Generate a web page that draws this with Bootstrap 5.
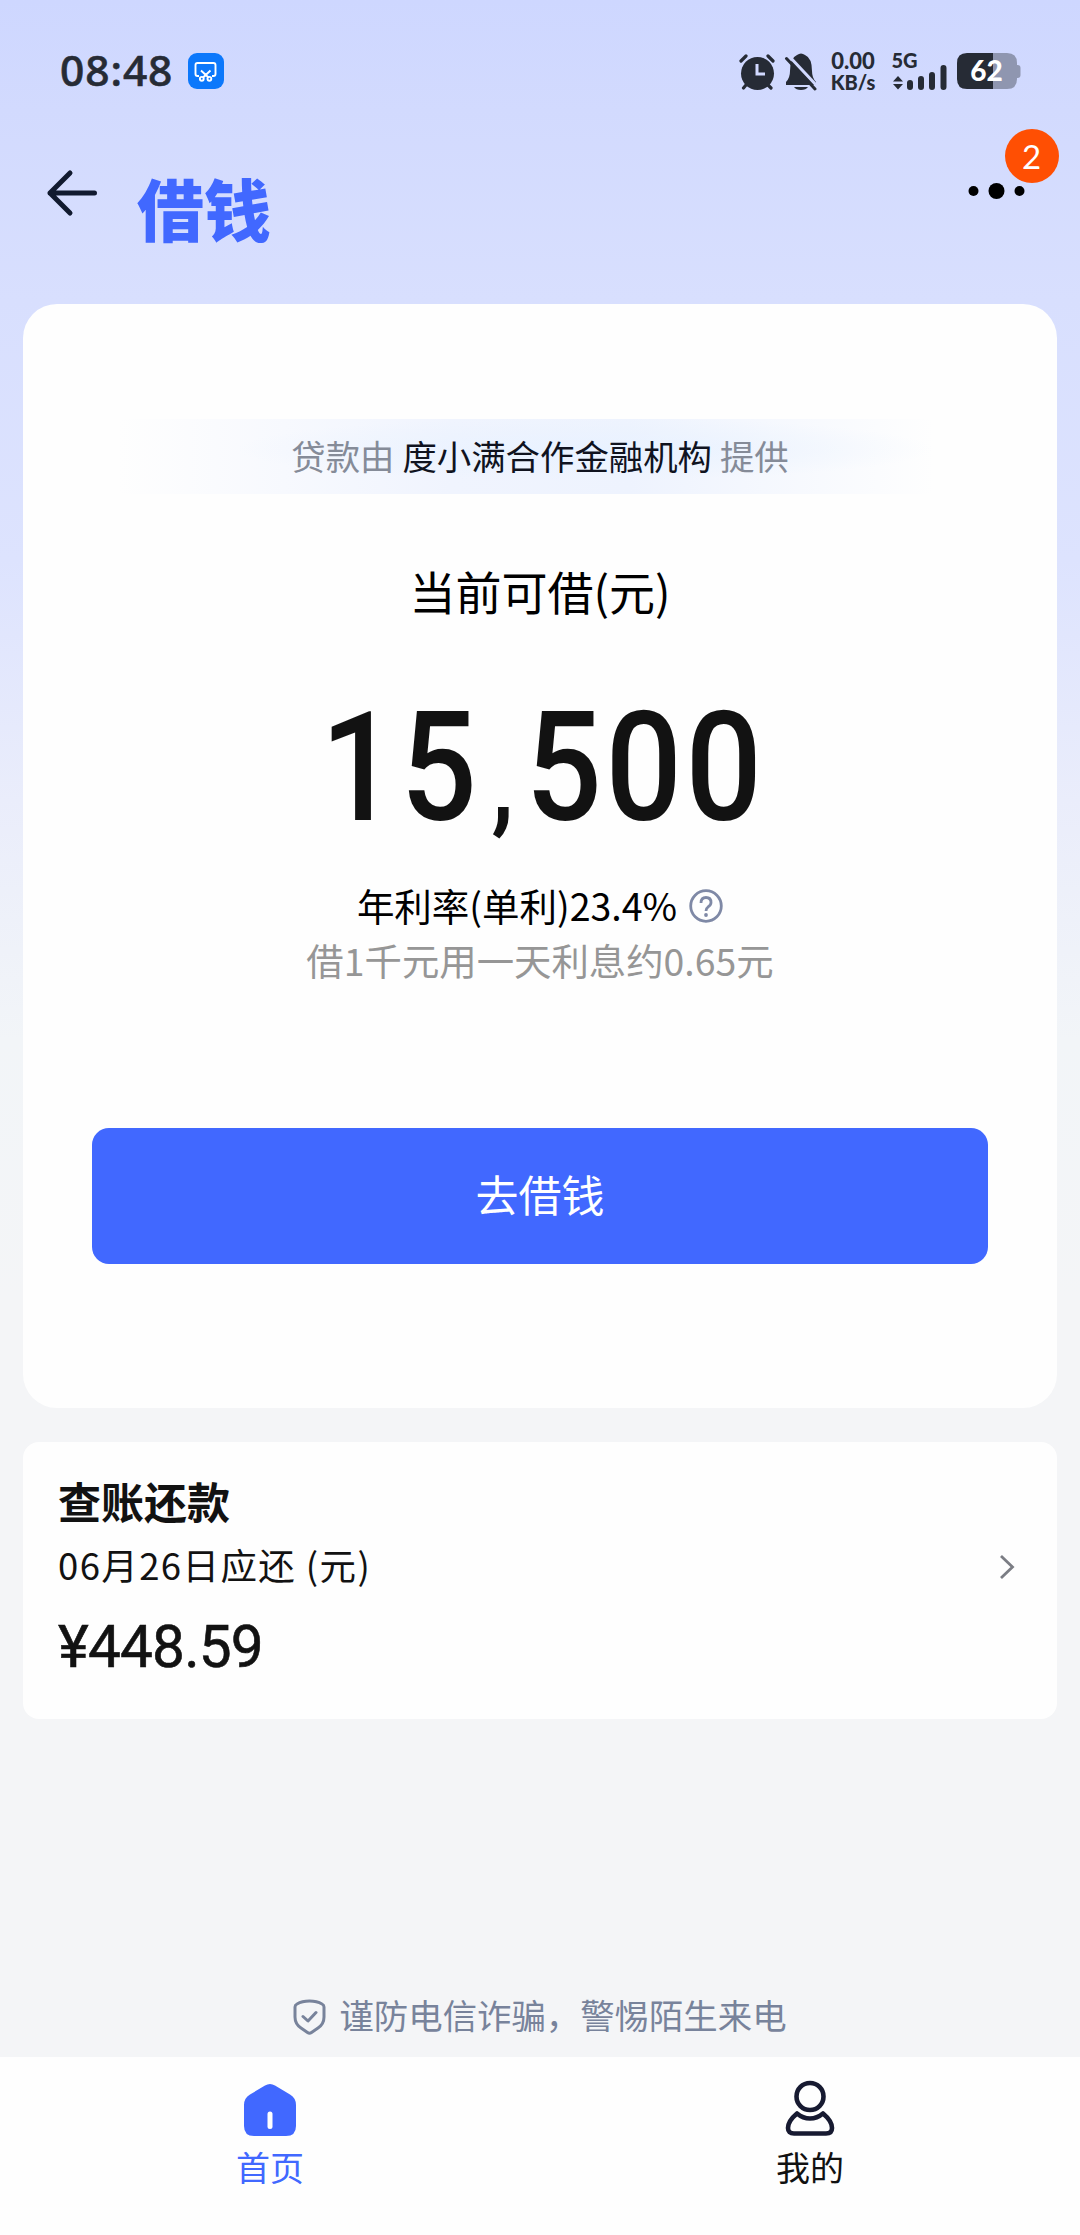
<!DOCTYPE html>
<html lang="zh-CN">
<head>
<meta charset="utf-8">
<meta name="viewport" content="width=device-width, initial-scale=1">
<title>借钱</title>
<link href="https://cdn.jsdelivr.net/npm/bootstrap@5.3.0/dist/css/bootstrap.min.css" rel="stylesheet">
<style>
:root{--brand:#4168ff;--ink:#121212;--muted-ink:#7c8496}
html,body{height:2235px}
body{font-family:"Noto Sans CJK SC",sans-serif;color:#000;background:linear-gradient(180deg,#ced7ff 0,#d2dafe 110px,#d8dffe 300px,#dde3fe 560px,#eaedfb 800px,#f2f5f8 1040px,#f4f5f7 1300px,#f4f5f7 2057px);overflow:hidden}
svg{display:block;flex:none}
.status{height:100px;padding:42px 59px 0 60px;font-family:"Noto Sans",sans-serif;color:#262b35}
.clock{font-size:42.5px;font-weight:500;line-height:58px;width:128px;letter-spacing:.9px;margin-top:-2px;-webkit-text-stroke:.6px #262b35}
.speed{width:52px;margin:0 12px 0 9px;font-family:Lato,sans-serif;font-size:22px;font-weight:900;line-height:22px;text-align:center;white-space:nowrap}
.speed .unit{font-size:20px;line-height:20px}
.head{height:204px;padding:0 54.5px 0 45px}
.back{margin-top:68px}
.head h1{font-size:67px;font-weight:900;line-height:66px;color:var(--brand);margin:74px 0 0 38px}
.more{margin-top:82px}
.count{position:absolute;left:39px;top:-53px;width:54px;height:54px;background:#ff4f03;color:#fff;font:400 33px/54px Lato,sans-serif}
.panel{margin:0 23px;background:#fefefe;border-radius:34px;height:1104px;padding:115px 69px 0}
.source{height:75px;font-size:34.4px;line-height:72px;color:#858b98;background:radial-gradient(ellipse at 55% 40%,#e9f2ff 0,rgba(233,242,255,0) 50%),linear-gradient(90deg,rgba(238,241,254,0) 3%,#f0f4fe 40%,#eef3fe 60%,rgba(238,241,254,0) 94%)}
.source b{font-weight:400;color:#10131f;margin:0 8px}
.label{font-size:46px;line-height:60px;margin-top:66px}
.sum{font:500 152px/180px Roboto,sans-serif;color:var(--ink);margin-top:58px;letter-spacing:4px;transform:translateX(3px) scaleX(.885)}
.sum .sep{font-size:115px;line-height:1;margin:0 9px 0 12px}
.rate{font-size:37.5px;line-height:50px;margin-top:22px}
.rate svg{margin:2px 0 0 12px}
.hint{font-size:37.4px;line-height:50px;color:#969696;margin-top:5px}
.go{height:136px;margin-top:143px;border-radius:17px;background:var(--brand);color:#fff;font-size:43px;border:0}
.go span{display:block;margin-top:-6px}
.bill{margin:34px 23px 0;height:277px;background:#fefefe;border-radius:16px;padding:0 42px 0 35px;color:var(--ink)}
.bill h2{font-size:43px;font-weight:700;line-height:60px;margin:-9px 0 0}
.bill .due{font-size:36.5px;line-height:50px;margin-top:10px;letter-spacing:1.4px}
.bill .owed{font:400 58.5px/70px Roboto,sans-serif;-webkit-text-stroke:.6px var(--ink);margin-top:22px;letter-spacing:-.8px}
.chev{margin-top:-27px}
.tip{margin-top:264px;height:74px;padding-bottom:10px;font-size:34.4px;color:#78839b}
.tip svg{margin:4px 13px 0 0}
.tabs{height:178px;background:#fefefe;padding-top:23px}
.tabs a{font-size:34px;line-height:50px;color:#111;text-decoration:none}
.tabs a span{margin-top:4px}
.tabs a.active{color:var(--brand)}
</style>
</head>
<body>
<div class="status d-flex align-items-center">
  <span class="clock">08:48</span>
  <svg width="36" height="36" viewBox="0 0 36 36"><rect width="36" height="36" rx="9" fill="#0c78fb"/><g fill="none" stroke="#fff" stroke-width="1.9"><path d="M11 23H9.500Q7.500 23 7.500 21V12Q7.500 10 9.500 10H25.500Q27.500 10 27.500 12V21Q27.500 23 25.500 23H24M13 17.500 20.500 24.500M22.500 17.500 15 24.500"/><circle cx="13.800" cy="25.800" r="1.900"/><circle cx="21.400" cy="25.800" r="1.900"/></g></svg>
  <svg class="ms-auto" width="38" height="40" viewBox="739 50 38 40"><g fill="none" stroke="#262b35" stroke-width="3.200" stroke-linecap="round"><path d="M742 60 747 55M774 60 769 55M747 84 744.500 87M769 84 772 87"/></g><circle cx="758.500" cy="72.500" r="16.500" fill="#262b35"/><path d="M758 63V73H766" fill="none" stroke="#d1d9ff" stroke-width="3"/></svg>
  <svg class="ms-2" width="34" height="40" viewBox="785 50 34 40"><path d="M787 84V81Q791 77 791 70Q791 57 798 54Q802 51 806 54Q813 57 813 70Q813 77 817 81V84ZM795 86H809Q807 89 802 89T795 86Z" fill="#262b35"/><path d="M789 54 818 85" stroke="#d1d9ff" stroke-width="3"/><path d="M787.500 57.500 816 88" stroke="#262b35" stroke-width="3" stroke-linecap="round"/></svg>
  <div class="speed">0.00<div class="unit">KB/s</div></div>
  <svg width="58" height="52" viewBox="891 45 58 52"><text x="891.500" y="68" font-family="Lato" font-weight="900" font-size="20" fill="#262b35">5G</text><path d="M893 81.500 898 76 903 81.500ZM893 84 898 89.500 903 84Z" fill="#262b35"/><path d="M910 83V87M921 79V87M932 75V87M943.500 68V87" stroke="#262b35" stroke-width="6" stroke-linecap="round"/></svg>
  <svg width="64" height="50" viewBox="957 46 64 50" class="ms-2"><rect x="1013" y="65" width="7.500" height="13" rx="3" fill="#8f96b0"/><path d="M993 53H1007Q1017 53 1017 63V79Q1017 89 1007 89H993Z" fill="#8f96b0"/><path d="M993 53H967Q957 53 957 63V79Q957 89 967 89H993Z" fill="#262b35"/><text x="986.500" y="81" text-anchor="middle" font-family="Lato" font-weight="900" font-size="28" fill="#fff">62</text></svg>
</div>
<header class="head d-flex align-items-start">
  <svg class="back" width="54" height="50" viewBox="0 0 54 50"><path d="M25 5 5 25 25 45M5 25H49.500" fill="none" stroke="#111a2f" stroke-width="5" stroke-linecap="round" stroke-linejoin="round"/></svg>
  <h1>借钱</h1>
  <div class="more position-relative ms-auto">
    <svg width="60" height="18" viewBox="966 182 60 18"><circle cx="973.500" cy="191" r="5"/><circle cx="996.500" cy="191" r="8"/><circle cx="1019.500" cy="191" r="5"/></svg>
    <span class="count rounded-circle text-center">2</span>
  </div>
</header>
<main class="panel text-center">
  <div class="source">贷款由<b>度小满合作金融机构</b>提供</div>
  <div class="label">当前可借(元)</div>
  <div class="sum">15<span class="sep">,</span>500</div>
  <div class="rate d-flex justify-content-center align-items-center">年利率(单利)23.4%
    <svg width="34" height="34" viewBox="0 0 34 34"><g fill="none" stroke="#7f89a6" stroke-width="2.800"><circle cx="17" cy="17" r="15.300"/><path d="M12 14Q12 8.500 17 8.500T22 13.500Q22 16 19.200 17.800Q17 19.300 17 22"/></g><circle cx="17" cy="26" r="1.900" fill="#7f89a6"/></svg>
  </div>
  <div class="hint">借1千元用一天利息约0.65元</div>
  <button class="go btn w-100 p-0" type="button"><span>去借钱</span></button>
</main>
<section class="bill d-flex align-items-center justify-content-between">
  <div>
    <h2>查账还款</h2>
    <div class="due">06月26日应还 (元)</div>
    <div class="owed">¥448.59</div>
  </div>
  <svg class="chev" width="16" height="28" viewBox="0 0 16 28"><path d="M2 3 13.500 14 2 25" fill="none" stroke="#7b7d84" stroke-width="2.800"/></svg>
</section>
<div class="tip d-flex justify-content-center align-items-center">
  <svg width="33" height="36" viewBox="0 0 33 36"><path d="M16.500 2Q24 2 29 5Q31 6 31 8V18Q31 25 25 29L18.500 33.500Q16.500 35 14.500 33.500L8 29Q2 25 2 18V8Q2 6 4 5Q9 2 16.500 2ZM10 17.500 15 22 23 13.500" fill="none" stroke="#78839b" stroke-width="3" stroke-linecap="round" stroke-linejoin="round"/></svg>
  谨防电信诈骗，警惕陌生来电
</div>
<nav class="tabs row g-0">
  <a class="col-6 active d-flex flex-column align-items-center" href="#">
    <svg width="54" height="58" viewBox="0 0 54 58"><path d="M22 5.500Q27 2.500 32 5.500L47 14.500Q53 18 53 25V46Q53 56 43 56H11Q1 56 1 46V25Q1 18 7 14.500Z" fill="#4168ff"/><path d="M27 34V46.500" stroke="#fff" stroke-width="5" stroke-linecap="round"/></svg>
    <span>首页</span>
  </a>
  <a class="col-6 d-flex flex-column align-items-center" href="#">
    <svg width="54" height="58" viewBox="0 0 54 58"><g fill="none" stroke="#171a31" stroke-width="4.600" stroke-linejoin="round"><circle cx="27" cy="16.500" r="13.500"/><path d="M14 33.500Q20 38.500 27 38.500T40 33.500Q49 41 49 48Q49 53.500 43 53.500H11Q5 53.500 5 48Q5 41 14 33.500Z"/></g></svg>
    <span>我的</span>
  </a>
</nav>
<script src="https://cdn.jsdelivr.net/npm/bootstrap@5.3.0/dist/js/bootstrap.bundle.min.js"></script>
</body>
</html>
